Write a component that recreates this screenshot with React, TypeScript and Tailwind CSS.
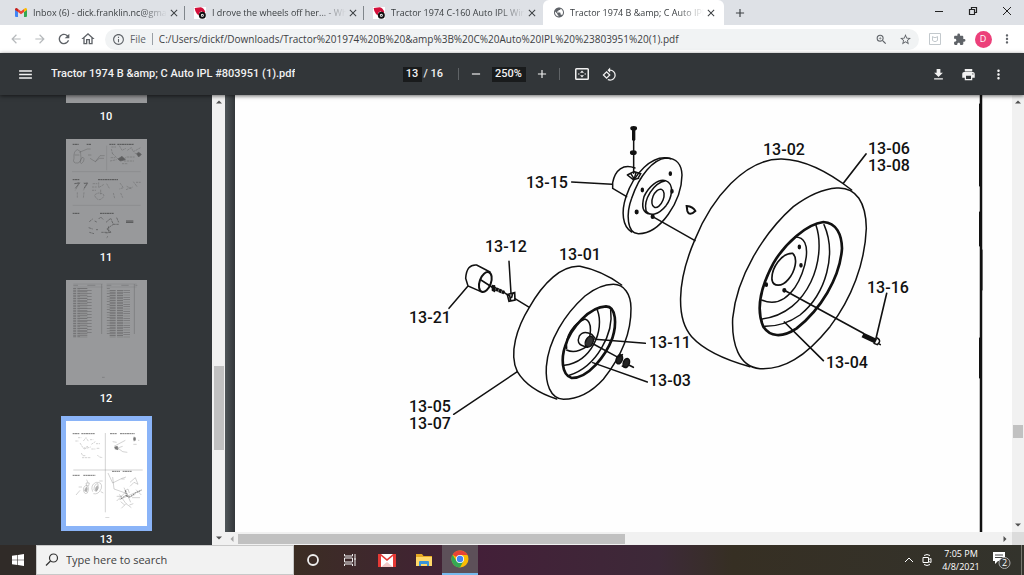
import type { ReactNode } from 'react';
import {
  MdAdd,
  MdArrowBack,
  MdArrowForward,
  MdClose,
  MdExtension,
  MdFileDownload,
  MdInfoOutline,
  MdMenu,
  MdMoreVert,
  MdOutlineHome,
  MdPrint,
  MdPublic,
  MdRefresh,
  MdRemove,
  MdRotate90DegreesCcw,
  MdStarBorder,
  MdZoomIn,
} from 'react-icons/md';

interface TabProps {
  title: string;
  icon: ReactNode;
  active?: boolean;
  divider?: boolean;
}

interface LabelProps {
  x: number;
  y: number;
  text: string;
}

interface ThumbnailProps {
  page: number;
  selected?: boolean;
  children?: ReactNode;
}

function GmailIcon() {
  return (
    <svg viewBox="0 0 24 18" className="h-[9px] w-3">
      <path d="M0 3v13a2 2 0 0 0 2 2h4V8z" fill="#4285f4" />
      <path d="M24 3v13a2 2 0 0 1-2 2h-4V8z" fill="#34a853" />
      <path d="M18 2v6l6-4V3c0-3-3-4-5-2z" fill="#fbbc04" />
      <path d="M6 2v6l6 4.500 6-4.500V2l-6 4.500z" fill="#ea4335" />
      <path d="M0 3v1l6 4V2L5 1C3-1 0 0 0 3z" fill="#c5221f" />
    </svg>
  );
}

function WheelHorseIcon() {
  return (
    <svg viewBox="0 0 36 36" className="h-3 w-3">
      <path d="M0 0h36v36H0z" fill="#fff" />
      <path d="M2 3 20 1q10 2 14 14l-3 3-9-5-6 4-2 8-5-4-5-9z" fill="#d3103b" />
      <circle cx="25" cy="25" r="7.500" fill="#fff" stroke="#111" strokeWidth="6" />
      <circle cx="25" cy="25" r="2" fill="#111" />
    </svg>
  );
}

function Tab({ title, icon, active, divider }: TabProps) {
  return (
    <div
      className={
        active
          ? 'flex h-full w-[181px] items-center rounded-t-md bg-white pl-2.5 pr-1.5'
          : 'flex h-full w-[179px] items-center pl-[9px]'
      }
    >
      <span className="flex w-3 shrink-0 justify-center">{icon}</span>
      <span
        className={
          active
            ? 'ml-[5px] min-w-0 flex-1 overflow-hidden whitespace-nowrap [mask-image:linear-gradient(to_right,black_80%,transparent)]'
            : 'ml-1.5 min-w-0 flex-1 overflow-hidden whitespace-nowrap [mask-image:linear-gradient(to_right,black_80%,transparent)]'
        }
      >
        {title}
      </span>
      <button aria-label="Close tab" className="flex w-3.5 shrink-0 justify-center text-[#3c4043]">
        <MdClose size={12} />
      </button>
      {!active && (
        <span className={divider ? 'ml-[3px] h-3.5 w-px bg-[#80868b]' : 'ml-[3px] h-3.5 w-px'} />
      )}
    </div>
  );
}

function TabStrip() {
  return (
    <div className="flex h-[25px] shrink-0 bg-[#dee1e6] pl-1.5 text-[9px] text-[#3c4043]">
      <Tab title="Inbox (6) - dick.franklin.nc@gma" icon={<GmailIcon />} divider />
      <Tab title="I drove the wheels off her... - Whe" icon={<WheelHorseIcon />} divider />
      <Tab title="Tractor 1974 C-160 Auto IPL Wiri" icon={<WheelHorseIcon />} />
      <Tab
        title="Tractor 1974 B &amp;amp; C Auto IPL"
        icon={<MdPublic size={13} className="text-[#5f6368]" />}
        active
      />
      <button aria-label="New tab" className="flex w-8 items-center justify-center text-[#3c4043]">
        <MdAdd size={14} />
      </button>
      <div className="ml-auto flex text-[#222]">
        <button aria-label="Minimize" className="flex w-[34px] items-center justify-center pb-1">
          <svg viewBox="0 0 10 10" className="h-2.5 w-2.5">
            <path d="M1 5.500h8" stroke="currentColor" />
          </svg>
        </button>
        <button aria-label="Restore" className="flex w-[34px] items-center justify-center pb-1">
          <svg viewBox="0 0 10 10" className="h-2.5 w-2.5">
            <path d="M1.500 3.500h5v5h-5zM3.500 3V1.500h5v5H7" fill="none" stroke="currentColor" strokeWidth="1.200" />
          </svg>
        </button>
        <button aria-label="Close window" className="flex w-[34px] items-center justify-center pb-1">
          <svg viewBox="0 0 10 10" className="h-2.5 w-2.5">
            <path d="m1 1 8 8M9 1 1 9" stroke="currentColor" />
          </svg>
        </button>
      </div>
    </div>
  );
}

function ToolButton({ label, children }: { label: string; children: ReactNode }) {
  return (
    <button aria-label={label} className="flex h-6 w-6 shrink-0 items-center justify-center">
      {children}
    </button>
  );
}

function AddressBar() {
  return (
    <div className="flex h-7 shrink-0 items-center bg-white pl-1 pr-[5px] text-[#5f6368]">
      <ToolButton label="Back">
        <MdArrowBack size={14} className="text-[#b6b9bc]" />
      </ToolButton>
      <ToolButton label="Forward">
        <MdArrowForward size={14} className="text-[#b6b9bc]" />
      </ToolButton>
      <ToolButton label="Reload">
        <MdRefresh size={16} />
      </ToolButton>
      <ToolButton label="Home">
        <MdOutlineHome size={16} />
      </ToolButton>
      <div className="ml-[5px] mr-1 flex h-[21px] flex-1 items-center rounded-full bg-[#f1f3f4] pr-0.5 text-[10px]">
        <MdInfoOutline size={13} className="ml-[7px] shrink-0" />
        <span className="ml-[5px]">File</span>
        <span className="ml-1.5 h-3 w-px bg-[#9aa0a6]" />
        <input
          aria-label="Address"
          className="ml-1.5 min-w-0 flex-1 bg-transparent text-[#3c4043] outline-none"
          defaultValue="C:/Users/dickf/Downloads/Tractor%201974%20B%20&amp;amp%3B%20C%20Auto%20IPL%20%23803951%20(1).pdf"
        />
        <ToolButton label="Zoom">
          <MdZoomIn size={13} />
        </ToolButton>
        <ToolButton label="Bookmark this page">
          <MdStarBorder size={13} />
        </ToolButton>
      </div>
      <ToolButton label="Extension">
        <svg viewBox="0 0 12 12" className="h-3 w-3" fill="none" stroke="#c3c9cd">
          <path d="M.5.5h11v11H.5z" />
          <path d="M3.500 3.500v4q2.500 2.500 5 0v-4l-1.500 1H5z" />
        </svg>
      </ToolButton>
      <ToolButton label="Extensions">
        <MdExtension size={13} />
      </ToolButton>
      <ToolButton label="Profile">
        <span className="flex h-[17px] w-[17px] items-center justify-center rounded-full bg-[#ec407a] text-[9px] text-white">
          D
        </span>
      </ToolButton>
      <ToolButton label="Menu">
        <MdMoreVert size={14} />
      </ToolButton>
    </div>
  );
}

function PdfToolbar() {
  return (
    <div className="z-10 flex h-[42px] shrink-0 items-center bg-[#323639] font-[Roboto,sans-serif] text-[11px] font-medium text-[#f1f1f1] shadow-[0_1px_4px_rgba(0,0,0,0.6)]">
      <div className="flex min-w-0 flex-1 items-center pl-[17px]">
        <button aria-label="Toggle sidebar">
          <MdMenu size={17} />
        </button>
        <h1 className="ml-[17px] truncate">Tractor 1974 B &amp;amp; C Auto IPL #803951 (1).pdf</h1>
      </div>
      <div className="flex items-center">
        <input
          aria-label="Page"
          className="h-[15px] w-[19px] bg-[#191b1c] text-center outline-none"
          defaultValue="13"
        />
        <span className="ml-0.5 w-5 whitespace-nowrap">/ 16</span>
        <span className="ml-3.5 h-3 w-px bg-[#5f6366]" />
        <button aria-label="Zoom out" className="ml-2.5">
          <MdRemove size={14} />
        </button>
        <input
          aria-label="Zoom level"
          className="ml-[9px] h-[15px] w-[34px] bg-[#191b1c] text-center outline-none"
          defaultValue="250%"
        />
        <button aria-label="Zoom in" className="ml-[9px]">
          <MdAdd size={14} />
        </button>
        <span className="ml-2.5 h-3 w-px bg-[#5f6366]" />
        <button aria-label="Fit to page" className="ml-3.5">
          <svg viewBox="0 0 16 14" className="h-3.5 w-4" fill="currentColor">
            <path d="M2.500 1h11A1.500 1.500 0 0 1 15 2.500v9a1.500 1.500 0 0 1-1.500 1.500h-11A1.500 1.500 0 0 1 1 11.500v-9A1.500 1.500 0 0 1 2.500 1zm0 1.500v9h11v-9zM8 3.500l2 2.200H6zM8 10.500 6 8.300h4zM4 6.500h1.500v1H4zM10.500 6.500H12v1h-1.500z" />
          </svg>
        </button>
        <button aria-label="Rotate" className="ml-3 mr-1">
          <MdRotate90DegreesCcw size={15} />
        </button>
      </div>
      <div className="flex flex-1 items-center justify-end gap-[15px] pr-[18px]">
        <button aria-label="Download">
          <MdFileDownload size={15} />
        </button>
        <button aria-label="Print">
          <MdPrint size={15} />
        </button>
        <button aria-label="More actions">
          <MdMoreVert size={15} />
        </button>
      </div>
    </div>
  );
}

function Thumbnail({ page, selected, children }: ThumbnailProps) {
  return (
    <a href={`#page-${page}`} className="flex h-[141px] shrink-0 flex-col items-center">
      <svg
        viewBox="0 0 243 315"
        className={
          selected
            ? 'h-[105px] w-[81px] shrink-0 bg-white outline-[5px] outline-[#8ab4f8]'
            : 'h-[105px] w-[81px] shrink-0 bg-[#98999b]'
        }
        fill="none"
        stroke="#222"
        strokeWidth="2"
      >
        {children}
      </svg>
      <span className="pt-1.5 leading-4">{page}</span>
    </a>
  );
}

function PageEleven() {
  return (
    <g opacity="0.6">
      <path d="M20 16h18M62 16h14M130 16h18M154 16h50M20 122h20M96 122h60M20 223h20M102 223h42" strokeWidth="3" strokeDasharray="6 1" />
      <path d="M122 20v74M18 98h206M20 199h204" strokeWidth="1" opacity="0.5" />
      <path d="M34 32q-12 4-10 26-6 16 12 14 12-4 8-26 4-10-10-14zM26 48h14M40 40l24-10h10M50 54q8 4 2 14-6 10-10 2 2-10 8-16M66 48h10M72 58l16 10 12-10h14M88 68l14-18h14" strokeWidth="1" />
      <path d="m136 30 4 16M136 24h14M160 20l8 14 12-6M140 44l20 20 20-8M134 56h14M132 66l20-4M184 34l12-8 6 12 22-12M206 42l18 8M182 54h24M174 66h30M168 74h16" strokeWidth="1" strokeDasharray="7 2" />
      <path d="m156 60 12-8 10 10-14 4zM212 44l6-4 8 6-8 8z" fill="#222" opacity="0.8" />
      <path d="m24 134 18-4-14 24M52 132h14l-14 22M34 160v18M54 160l-2 18M80 134h14M78 144h14M78 154h12M98 130v16l16-10M104 152v14M86 168q14-12 28 0-4 14-16 14-10-4-12-14M122 134l8 14M162 132l10 14-12 4M142 162l4 16M164 162l6 14M180 152l20-8M182 142l16 8M202 128l12 16M210 130h14" strokeDasharray="7 2" strokeWidth="1" />
      <path d="m26 134 14-2-12 16M54 134l10-2-10 16" />
      <path d="m70 248 10-8M68 266l12 4M70 280l14 4M86 246l8 4M98 240l6-6 8 8M90 272h6M120 250l14-12 8 18-20 14 14 10-18 2M142 256h16M106 280h16M128 262v20M152 236l6 14M126 292l-4 4" strokeDasharray="7 2" />
      <path d="M180 246h22M180 250h22" strokeWidth="3" />
    </g>
  );
}

function PageTwelve() {
  return (
    <g opacity="0.3">
      <path d="M22 16h14M64 16h24M122 16h14M166 16h22M208 16h6M107 12v150M205 12v150" strokeWidth="2" />
      <path d="M22 12h88M122 12h90M22 21h88M122 21h90" strokeWidth="1" />
      <path d="M26 24v148" strokeWidth="9" strokeDasharray="3 2" />
      <path d="M38 24v148" strokeWidth="8" strokeDasharray="3 2" />
      <path d="M53 24v148" strokeWidth="22" strokeDasharray="3 3 2 2" />
      <path d="M70 30v132" strokeWidth="14" strokeDasharray="2 7" />
      <path d="M127 24v142" strokeWidth="9" strokeDasharray="2 6" />
      <path d="M140 30v142M162 30v142" strokeWidth="18" strokeDasharray="3 2" />
      <path d="M182 30v142" strokeWidth="20" strokeDasharray="2 5" />
      <path d="M108 292h8" />
    </g>
  );
}

function PageThirteen() {
  return (
    <g opacity="0.6">
      <path d="M20 38h20M46 38h40M132 38h20M162 38h44M20 163h22M52 163h36M138 151h24M170 151h28" strokeWidth="3" strokeDasharray="6 1" />
      <path d="M118 36v238M22 147h208" strokeWidth="1" />
      <path d="M36 50h10M28 60h10M52 60l8-10 8 12M42 66l10 16 14-6M72 56h10M76 70l12-8M90 68h12M54 84l20-6M76 84h12M92 82h10M46 96l4 8h10M48 110h26M94 102l6 6 10 2" strokeWidth="1" strokeDasharray="7 2" />
      <path d="m144 76 34-18M146 84l24-8M140 62l12 2M154 80l16 12 14 2M204 46l4 8-4 8M202 70h10M216 58h4" strokeWidth="1" />
      <path d="m146 78 8-2 2 10-8-2zM203 50h5v8h-5z" fill="#222" />
      <path d="M30 222l12-14M38 198h10M54 214q-6-16 8-22 10 8 2 24-6 4-10-2zM60 186h10l-2 8-6 2zM62 176l4 10M80 212q-8-20 10-28 20-2 16 18-8 20-24 16M84 206q0-18 12-18 6 14-6 24zM100 180h10M104 212l8 4" strokeWidth="1" />
      <path d="M56 210q0-8 6-12 4 4 0 14zM88 208q0-10 6-14 4 6-2 16z" fill="#222" opacity="0.6" />
      <path d="m126 156 14 30 28-14 12-4M140 168l4 36 40 14M166 174h10M192 184l16-14 8 20-12-6-12 12M152 240l30-30M160 236l68-30M174 200l14 30 20-10M160 220l20 28M182 216l12 28M166 262l14-14 16 12M198 230h24M210 206l16 16M152 226h16M176 210l10-6 4 12M164 242l12 10M190 252l12-4" strokeWidth="1" />
      <path d="m164 234 14-10 14 4 16-12 18-8M178 208l4 18" strokeDasharray="5 2" strokeWidth="3" />
      <path d="M118 290h12" strokeWidth="1" />
    </g>
  );
}

function Arrow({ direction }: { direction: 'up' | 'down' | 'left' | 'right' }) {
  const paths = {
    up: 'M1 5.500 4 2.500l3 3z',
    down: 'M1 2.500h6l-3 3z',
    left: 'M5.500 1v6l-3-3z',
    right: 'M2.500 1v6l3-3z',
  };
  return (
    <svg viewBox="0 0 8 8" className="h-2 w-2 shrink-0" fill={direction === 'left' ? '#a3a3a3' : '#505050'}>
      <path d={paths[direction]} />
    </svg>
  );
}

function Sidebar() {
  return (
    <aside className="flex shrink-0 bg-[#323639]">
      <nav className="w-[212px] overflow-hidden font-[Roboto,sans-serif] text-[11px] font-medium text-white">
        <div className="-mt-[97px] flex flex-col">
          <Thumbnail page={10} />
          <Thumbnail page={11}>
            <PageEleven />
          </Thumbnail>
          <Thumbnail page={12}>
            <PageTwelve />
          </Thumbnail>
          <Thumbnail page={13} selected>
            <PageThirteen />
          </Thumbnail>
        </div>
      </nav>
      <div className="flex w-[13px] flex-col items-center bg-[#f1f1f1] py-[3px]">
        <Arrow direction="up" />
        <div className="flex-[260]" />
        <div className="w-2.5 flex-[84] bg-[#c1c1c1]" />
        <div className="flex-[84]" />
        <Arrow direction="down" />
      </div>
    </aside>
  );
}

function PartLabel({ x, y, text }: LabelProps) {
  return (
    <text x={x} y={y} className="font-[Roboto,sans-serif] text-[16px] font-medium" fill="#111" stroke="none">
      {text}
    </text>
  );
}

const labels: LabelProps[] = [
  { x: 763, y: 155, text: '13-02' },
  { x: 868, y: 154, text: '13-06' },
  { x: 868, y: 171, text: '13-08' },
  { x: 526, y: 188, text: '13-15' },
  { x: 485, y: 252, text: '13-12' },
  { x: 559, y: 260, text: '13-01' },
  { x: 409, y: 323, text: '13-21' },
  { x: 867, y: 293, text: '13-16' },
  { x: 649, y: 348, text: '13-11' },
  { x: 649, y: 386, text: '13-03' },
  { x: 826, y: 368, text: '13-04' },
  { x: 409, y: 412, text: '13-05' },
  { x: 409, y: 429, text: '13-07' },
];

function WheelDiagram() {
  return (
    <svg viewBox="235 95 777 437" className="h-full w-full bg-[#fefefe]" fill="none" stroke="#111" strokeLinecap="round">
      {/* page rule */}
      <path d="M981 95v437" strokeWidth="2.500" />
      <path d="M979.500 104v82M979.500 212v34M982 250v40M979.500 338v40" strokeWidth="1" />

      {/* front wheel */}
      <g transform="translate(400 230) scale(.33333)" strokeWidth="4.500">
        <path d="M470 507Q385 480 352 425C325 370 352 290 388 232C430 158 485 105 540 109Q605 122 665 165" />
        <path d="M640 163C672 163 693 192 693 235C694 310 660 385 610 448C570 492 530 508 490 508C450 505 436 460 439 410C445 330 495 252 555 198Q600 163 640 163z" />
        <path d="M618 229C650 230 650 285 637 325C617 378 565 444 515 444C482 435 485 380 495 350C512 292 570 230 618 229z" strokeWidth="8" />
        <path d="M592 240C615 300 575 395 493 406M632 240C642 310 590 410 508 436M555 267C580 275 572 320 560 350Q525 373 500 360M500 355C495 320 520 280 555 267" />
        <path d="M575 313Q550 300 538 318Q528 342 550 348L562 352M575 313L585 325" />
        <ellipse cx="568" cy="335" rx="11" ry="17" transform="rotate(25 568 335)" fill="#333" />
        <path d="M585 328L736 340M580 342L650 380M578 398L742 456M352 425L161 553M327 94L333 190M345 206L388 232" />
        <g fill="#222">
          <ellipse cx="658" cy="388" rx="9" ry="14" transform="rotate(20 658 388)" />
          <ellipse cx="679" cy="399" rx="9" ry="14" transform="rotate(20 679 399)" />
        </g>
        <path d="M655 380l12-6M675 412l-8-4M688 406l12 6" strokeWidth="5" />
        <ellipse cx="256" cy="156" rx="17" ry="31" transform="rotate(20 256 156)" strokeWidth="6" />
        <path d="M270 126L230 105Q200 102 197 145L204 168L243 185M204 168L147 235M243 150L280 174" />
        <path d="M278 173L313 188" strokeWidth="11" strokeDasharray="9 1" strokeLinecap="butt" />
        <path d="M278 167v14M283 168v16" strokeWidth="6" />
        <path d="M313 188L325 196" />
        <path d="M322 194l22-6 1 22-18 4zM328 192l4 20M338 190l-3 12" strokeWidth="5" />
      </g>

      {/* hub */}
      <g transform="translate(510 110) scale(.33333)" strokeWidth="4.500">
        <path d="M468 144C500 144 515 165 516 195C515 275 450 372 385 371C350 370 348 310 365 265C388 195 430 148 468 144z" />
        <path d="M482 146C425 130 370 195 348 260C333 305 337 350 365 366" />
        <path d="M375 174C340 160 315 180 308 218L308 235L350 260M185 216L306 223" />
        <path d="M467 212C445 205 415 230 402 260C394 290 398 310 420 312M467 212C495 222 485 265 468 287C445 315 420 320 408 302C400 270 430 218 467 212" />
        <ellipse cx="444" cy="265" rx="16" ry="29" transform="rotate(22 444 265)" />
        <g fill="#111">
          <ellipse cx="481" cy="191" rx="3" ry="5" />
          <ellipse cx="397" cy="240" rx="3" ry="5" />
          <ellipse cx="380" cy="306" rx="4" ry="5" />
          <ellipse cx="428" cy="320" rx="4" ry="5" />
          <ellipse cx="486" cy="244" rx="3" ry="5" />
          <ellipse cx="371" cy="55" rx="8" ry="5" />
          <ellipse cx="370" cy="128" rx="8" ry="5" />
        </g>
        <path d="M371 58v30" strokeWidth="10" />
        <path d="M371 90v100M352 195l20-10 20 6-8 14M352 195l18 14 16-4M362 190l10 16M378 188l-4 14M432 322L555 392" />
        <path d="M530 288Q550 290 556 303Q538 320 532 303z" strokeWidth="6" />
      </g>

      {/* rear wheel */}
      <g transform="translate(670 120) scale(.33333)" strokeWidth="4.500">
        <path d="M240 740Q115 705 65 650C20 600 18 490 75 358C125 235 225 115 335 117Q430 120 545 210" />
        <path d="M500 204C560 200 588 250 589 325C585 430 545 535 480 620C405 712 340 750 270 746C205 740 185 670 188 595C200 470 280 340 370 260Q440 208 500 204z" />
        <path d="M460 306C500 308 515 345 516 385C510 475 450 570 380 625C335 655 300 650 280 620C258 570 270 505 310 430C345 370 410 312 460 306z" strokeWidth="8" />
        <path d="M438 316C470 410 420 580 275 597M462 314C500 400 470 520 390 585Q340 620 284 619M375 351C435 350 405 460 375 502C345 545 310 555 275 540" />
        <path d="M368 400C385 415 375 455 355 478C335 502 310 500 306 480C303 445 335 398 368 400z" strokeWidth="5" />
        <g fill="#111">
          <ellipse cx="388" cy="381" rx="3" ry="5" />
          <ellipse cx="393" cy="436" rx="3" ry="5" />
          <ellipse cx="343" cy="511" rx="4" ry="5" />
          <ellipse cx="289" cy="494" rx="3" ry="5" />
        </g>
        <path d="M343 511L580 640M343 606L460 722M650 520L618 655M588 102L520 190" strokeWidth="5" />
        <path d="M578 645L618 664" strokeWidth="15" strokeLinecap="butt" />
        <path d="M622 654q14 8 0 20l-10-4M625 670l6 4" />
      </g>

      {labels.map((label) => (
        <PartLabel key={label.text} {...label} />
      ))}
    </svg>
  );
}

function Viewer() {
  return (
    <main className="flex min-w-0 flex-1 flex-col">
      <div className="flex min-h-0 flex-1">
        <div className="w-2.5 shrink-0 bg-linear-to-r from-[#4f5558] to-[#33373a]" />
        <div className="min-w-0 flex-1">
          <WheelDiagram />
        </div>
        <div className="flex w-3 shrink-0 flex-col items-center bg-[#f1f1f1] py-[3px]">
          <Arrow direction="up" />
          <div className="flex-[319]" />
          <div className="w-2.5 flex-[13] bg-[#c1c1c1]" />
          <div className="flex-[83]" />
          <Arrow direction="down" />
        </div>
      </div>
      <div className="flex h-[13px] shrink-0 items-center bg-[#f1f1f1]">
        <div className="flex flex-1 items-center px-[3px]">
          <Arrow direction="left" />
          <div className="ml-0.5 h-2.5 flex-[387] bg-[#c1c1c1]" />
          <div className="flex-[376]" />
          <Arrow direction="right" />
        </div>
        <div className="h-full w-3 bg-[#dcdcdc]" />
      </div>
    </main>
  );
}

function TaskbarIcon({ label, active, children }: { label: string; active?: boolean; children: ReactNode }) {
  return (
    <button
      aria-label={label}
      className={
        active
          ? 'flex h-full w-9 items-center justify-center border-b-2 border-[#76b9ed] bg-[#5d5059]'
          : 'flex h-full w-[37px] items-center justify-center'
      }
    >
      {children}
    </button>
  );
}

function Taskbar() {
  return (
    <footer className="flex h-[30px] shrink-0 items-center bg-[#302b28] text-white">
      <button aria-label="Start" className="flex h-full w-9 items-center justify-center">
        <svg viewBox="0 0 12 12" className="h-3 w-3" fill="#fff">
          <path d="M0 1.700 5.400 1v4.700H0zM6 .9 12 0v5.700H6zM0 6.300h5.400V11L0 10.300zM6 6.300h6V12l-6-.9z" />
        </svg>
      </button>
      <div className="flex h-full w-[258px] items-center border border-[#c8c8c8] bg-[#f2f2f2] text-[#404040]">
        <svg viewBox="0 0 14 14" className="ml-2 h-3.5 w-3.5 shrink-0" fill="none" stroke="#333" strokeWidth="1.200">
          <circle cx="8.500" cy="5" r="4" />
          <path d="M5.500 8 1 12.500" />
        </svg>
        <input
          aria-label="Search"
          className="ml-[7px] min-w-0 flex-1 bg-transparent text-[11px] outline-none placeholder:text-[#404040]"
          placeholder="Type here to search"
        />
      </div>
      <div className="flex h-full flex-1 bg-linear-to-r from-[#3b2d23] from-0% via-[#431f38] via-50% to-[#3d2938]">
        <TaskbarIcon label="Cortana">
          <svg viewBox="0 0 14 14" className="h-3.5 w-3.5" fill="none" stroke="#eee" strokeWidth="1.800">
            <circle cx="7" cy="7" r="5" />
          </svg>
        </TaskbarIcon>
        <TaskbarIcon label="Task view">
          <svg viewBox="0 0 14 14" className="h-3.5 w-3.5" fill="none" stroke="#eee">
            <path d="M1.500 1v2h8V1M1.500 5h8v4h-8zM1.500 13v-2h8v2M12 1v12M11 6h2" />
          </svg>
        </TaskbarIcon>
        <TaskbarIcon label="Mail">
          <svg viewBox="0 0 18 13" className="h-[13px] w-[18px]">
            <path d="M0 0h18v13H0z" fill="#e53935" />
            <path d="M3 2 9 7l6-5v11H3z" fill="#fff" />
            <path d="M3 0h12L9 5z" fill="#fff" />
            <path d="m3 13 6-5 6 5" fill="#f3c9c7" />
          </svg>
        </TaskbarIcon>
        <TaskbarIcon label="File Explorer">
          <svg viewBox="0 0 16 14" className="h-3.5 w-4">
            <path d="M0 1h6l1.500 2H16v10H0z" fill="#e5a823" />
            <path d="M0 4h16v9H0z" fill="#ffd868" />
            <path d="M3 13V9q0-1 1-1h8q1 0 1 1v4h-2v-2H5v2z" fill="#3a94d8" />
          </svg>
        </TaskbarIcon>
        <TaskbarIcon label="Google Chrome" active>
          <svg viewBox="0 0 18 18" className="h-[18px] w-[18px]">
            <circle cx="9" cy="9" r="8.500" fill="#fbbc04" />
            <path d="M9 9 1.600 4.700A8.500 8.500 0 0 1 16.500 5H9z" fill="#ea4335" />
            <path d="M1.600 4.700A8.500 8.500 0 0 0 9 17.500L12.500 11 9 9 5.500 11z" fill="#34a853" />
            <circle cx="9" cy="9" r="4" fill="#fff" />
            <circle cx="9" cy="9" r="3.200" fill="#4285f4" />
          </svg>
        </TaskbarIcon>
      </div>
      <div className="flex h-full flex-1 items-center justify-end bg-linear-to-r from-[#3d2938] via-[#362f23] via-20% to-[#33332c]">
        <button aria-label="Show hidden icons" className="mr-2">
          <svg viewBox="0 0 10 10" className="h-2.5 w-2.5" fill="none" stroke="#fff">
            <path d="M1 7l4-4 4 4" />
          </svg>
        </button>
        <button aria-label="Meet now" className="mr-2.5">
          <svg viewBox="0 0 10 14" className="h-3.5 w-2.5" fill="none" stroke="#fff">
            <path d="M1 4.500h5.500v5H1zM6.500 6.500l2.500-1v4l-2.500-1M2 2.500q3-2 6 0M2 11.500q3 2 6 0" />
          </svg>
        </button>
        <div className="w-[38px] text-center text-[9px] leading-[13px]">
          <div>7:05 PM</div>
          <div>4/8/2021</div>
        </div>
        <button aria-label="Notifications" className="ml-3 mr-2.5">
          <svg viewBox="0 0 19 20" className="h-5 w-[19px]">
            <path d="M1 2h12v9H6l-3 3v-3H1z" fill="#fff" />
            <path d="M3 5h8M3 7.500h8" stroke="#444" />
            <circle cx="12.500" cy="13" r="5.500" fill="#3a3a36" stroke="#aaa" />
            <text x="12.500" y="16" textAnchor="middle" fill="#fff" className="text-[9px]">
              2
            </text>
          </svg>
        </button>
        <span className="mr-0.5 h-full w-px bg-[#77776f]" />
      </div>
    </footer>
  );
}

export default function App() {
  return (
    <div className="flex h-screen flex-col overflow-hidden font-['Open_Sans','Noto_Sans',sans-serif]">
      <TabStrip />
      <AddressBar />
      <PdfToolbar />
      <div className="flex min-h-0 flex-1">
        <Sidebar />
        <Viewer />
      </div>
      <Taskbar />
    </div>
  );
}
